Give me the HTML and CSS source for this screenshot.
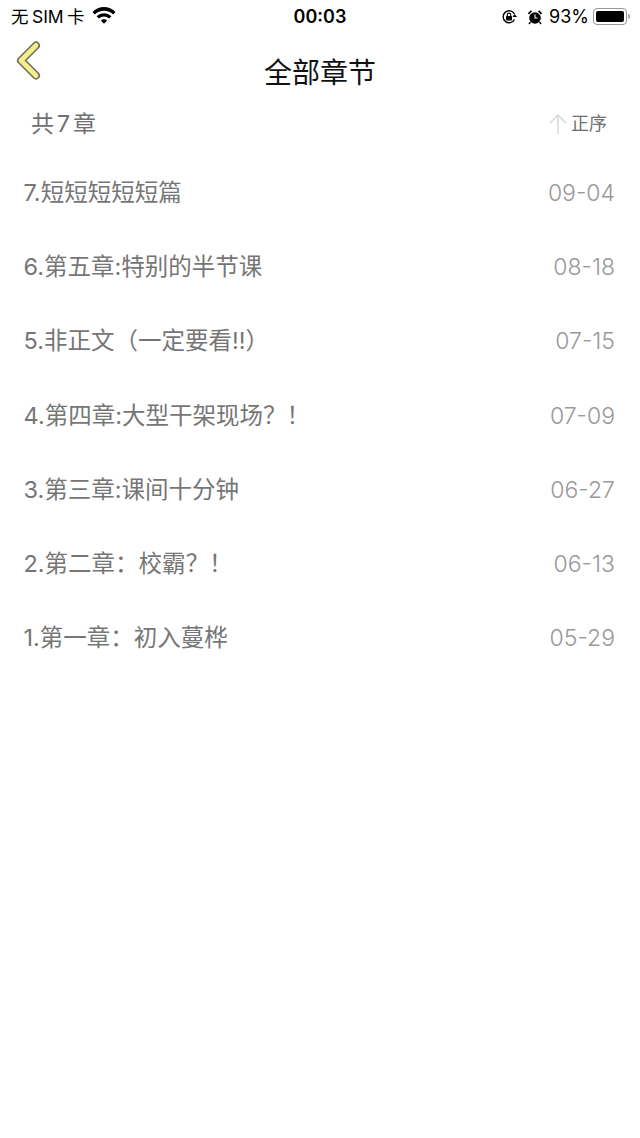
FILE: index.html
```html
<!DOCTYPE html>
<html>
<head>
    <meta charset="UTF-8">
    <meta name="viewport" content="width=device-width, initial-scale=1.0">
    <title>全部章节</title>
    <link rel="stylesheet" href="styles.css">
</head>
<body>
    <div class="status-bar">
        <div class="status-left">
            <span class="carrier">无 SIM 卡</span>
            <svg class="wifi" width="24" height="18" viewBox="0 0 24 18">
                <path d="M.5 6C7-.6 17-.6 23.500 6l-2.300 2.400C16 3.400 8 3.400 2.800 8.400z" fill="#000"/>
                <path d="M4.600 10.200c4.200-4 10.600-4 14.800 0l-2.300 2.400c-3-2.700-7.200-2.700-10.200 0z" fill="#000"/>
                <path d="M8.800 14.400c2-1.500 4.400-1.500 6.400 0L12 17.800z" fill="#000"/>
            </svg>
        </div>
        <div class="status-time">00:03</div>
        <div class="status-right">
            <svg class="lock" width="17" height="16" viewBox="0 0 17 16">
                <path d="M13.500 10.500A6 6 0 1 1 13.500 5" fill="none" stroke="#000" stroke-width="1.400"/>
                <path d="M16 8h-4.500l2.200-3z" fill="#000"/>
                <rect x="5" y="7" width="6" height="4.500" rx="0.800" fill="#000"/>
                <path d="M6.300 7V5.800a1.700 1.700 0 0 1 3.400 0V7" fill="none" stroke="#000" stroke-width="1.100"/>
            </svg>
            <svg class="alarm" width="16" height="16" viewBox="0 0 16 16">
                <circle cx="8" cy="9" r="5.800" fill="#000"/>
                <path d="M8 5.500V9h2.500" fill="none" stroke="#fff" stroke-width="1.100"/>
                <path d="M.8 4.200 3.800 1.300 5 2.500 2 5.400zM15.200 4.200 12.200 1.300 11 2.500 14 5.400z" fill="#000"/>
                <path d="M3.500 13 2 15M12.500 13l1.500 2" stroke="#000" stroke-width="1.400"/>
            </svg>
            <span class="battery-text">93%</span>
            <div class="battery"><div class="battery-fill"></div></div>
            <div class="battery-cap"></div>
        </div>
    </div>

    <div class="nav-bar">
        <svg class="back" width="30" height="42" viewBox="0 0 30 42">
            <path d="M23 6.500 8 21.500 23 36.500" fill="none" stroke="#6b6b58" stroke-width="8" stroke-linecap="round" stroke-linejoin="round"/>
            <path d="M23 6.500 8 21.500 23 36.500" fill="none" stroke="#f5ee8c" stroke-width="5" stroke-linecap="round" stroke-linejoin="round"/>
        </svg>
        <h1>全部章节</h1>
    </div>

    <div class="summary">
        <span class="count">共<span class="count-num">7</span>章</span>
        <span class="sort">
            <svg width="20" height="22" viewBox="0 0 20 22">
                <path d="M10 21V2M2 10l8-8 8 8" fill="none" stroke="#d8d8d8" stroke-width="1.500"/>
            </svg>
            正序
        </span>
    </div>

    <ul class="chapters">
        <li><span>7.短短短短短篇</span><span class="date">09-04</span></li>
        <li><span>6.第五章:特别的半节课</span><span class="date">08-18</span></li>
        <li><span>5.非正文（一定要看!!）</span><span class="date">07-15</span></li>
        <li><span>4.第四章:大型干架现场？！</span><span class="date">07-09</span></li>
        <li><span>3.第三章:课间十分钟</span><span class="date">06-27</span></li>
        <li><span>2.第二章：校霸？！</span><span class="date">06-13</span></li>
        <li><span>1.第一章：初入蔓桦</span><span class="date">05-29</span></li>
    </ul>
</body>
</html>
```

FILE: styles.css
```css
body {
    font-family: Inter, "Noto Sans CJK SC", sans-serif;
    background-color: #fff;
    margin: 0;
    padding: 0;
}

.status-bar {
    display: flex;
    justify-content: space-between;
    align-items: center;
    height: 33px;
    padding: 0 10px 0 11px;
    position: relative;
    color: #000;
}

.status-left,
.status-right {
    display: flex;
    align-items: center;
}

.carrier {
    font-size: 17.500px;
    line-height: 20px;
    word-spacing: -1.500px;
}

.wifi {
    margin-left: 7px;
    margin-top: -4px;
}

.status-time {
    position: absolute;
    left: 0;
    right: 0;
    text-align: center;
    font-size: 18px;
    font-weight: 600;
    line-height: 20px;
}

.lock {
    margin-right: 1px;
}

.alarm {
    margin-left: 8px;
}

.battery-text {
    font-size: 18px;
    line-height: 20px;
    margin-left: 6px;
}

.battery {
    width: 34px;
    height: 17px;
    margin-left: 4px;
    padding: 2px;
    border: 1px solid #999;
    border-radius: 4px;
    box-sizing: border-box;
}

.battery-fill {
    height: 100%;
    background-color: #000;
    border-radius: 2px;
}

.battery-cap {
    width: 2px;
    height: 5px;
    margin-left: 1px;
    background-color: #aaa;
    border-radius: 0 2px 2px 0;
}

.nav-bar {
    position: relative;
    height: 66px;
    text-align: center;
}

.back {
    position: absolute;
    left: 13px;
    top: 6px;
}

.nav-bar h1 {
    margin: 0;
    padding-top: 21px;
    font-size: 28px;
    font-weight: 400;
    line-height: 38px;
    color: #111;
}

.summary {
    display: flex;
    justify-content: space-between;
    align-items: center;
    height: 50px;
    padding: 0 33px 0 31px;
    color: #707070;
}

.count {
    font-size: 23px;
    line-height: 30px;
}

.count-num {
    margin: 0 3px;
}

.sort {
    display: flex;
    align-items: center;
    gap: 3px;
    font-size: 18px;
    line-height: 24px;
}

.chapters {
    list-style: none;
    margin: 0;
    padding: 0 25px 0 23.500px;
}

.chapters li {
    display: flex;
    justify-content: space-between;
    align-items: center;
    height: 74.200px;
    font-size: 23.500px;
    line-height: 30px;
    color: #767676;
    position: relative;
    top: 7px;
}

.date {
    font-size: 23px;
    font-weight: 300;
    color: #999;
}
```
